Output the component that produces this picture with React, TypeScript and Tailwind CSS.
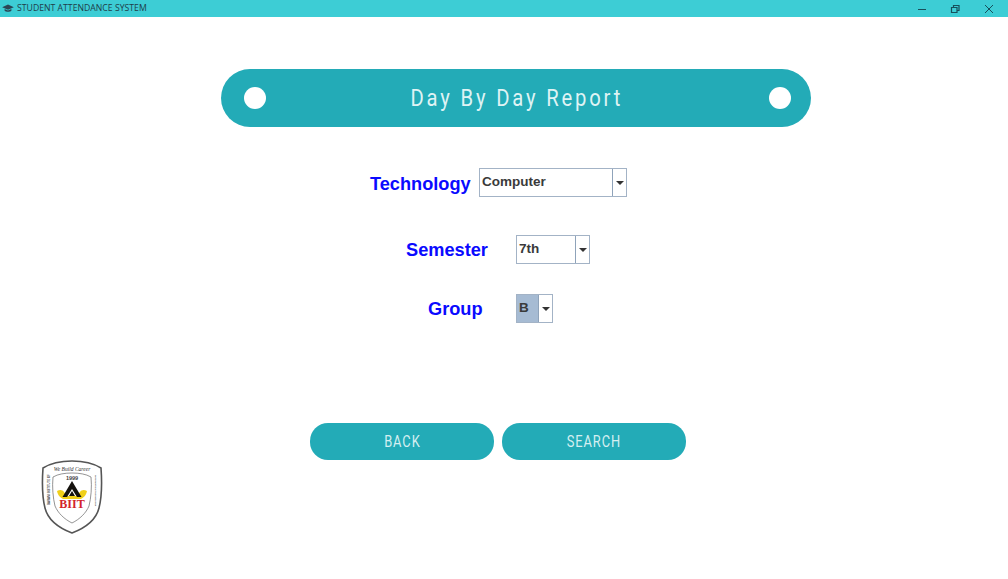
// Day By Day Report screen of the attendance desktop app.
const din = "font-['Roboto',sans-serif]";
const arial = "font-['Liberation_Sans',Arial,sans-serif]";

function TitleBar() {
  return (
    <div className="flex h-[17px] items-center bg-[#3dcdd5] pl-[2px] text-[#1f3d4a]">
      <svg width="12" height="9" viewBox="0 0 12 9" className="mr-[3px]">
        <path d="M6 0.5 11.8 3.2 6 5.8 0.2 3.2Z" fill="#2b4656" />
        <path d="M2.6 5v1.8C4 8.2 8 8.2 9.4 6.8V5L6 6.6Z" fill="#2b4656" />
      </svg>
      <span className="text-[8.7px] leading-none font-['Open_Sans',sans-serif]">STUDENT ATTENDANCE SYSTEM</span>
      <div className="ml-auto flex items-center">
        <svg width="10" height="10" viewBox="0 0 10 10" className="mr-[23px]">
          <path d="M1 5.5h8" stroke="#17505c" strokeWidth="1" />
        </svg>
        <svg width="10" height="10" viewBox="0 0 10 10" className="mr-[24px]">
          <path d="M1.5 3.5h5.5v5H1.5zM3.5 3.5V1.5H9v5H7" fill="none" stroke="#17505c" strokeWidth="1.2" />
        </svg>
        <svg width="10" height="10" viewBox="0 0 10 10" className="mr-[14px]">
          <path d="M1 1l8 8M9 1 1 9" stroke="#17505c" strokeWidth="1" />
        </svg>
      </div>
    </div>
  );
}

function Combo({ value, fieldClass, selected }: { value: string; fieldClass: string; selected?: boolean }) {
  return (
    <div className="flex h-[29px] border border-[#a3b3c6] bg-white">
      <div
        className={`${fieldClass} ${arial} border-r border-[#8fa3ba] pl-[2px] pt-[4px] text-[13.5px] leading-[17px] font-bold text-[#3a3a3a] ${
          selected ? "bg-[#a6bbd3]" : ""
        }`}
      >
        {value}
      </div>
      <div className="flex w-[13px] items-center justify-center">
        <div className="h-0 w-0 border-x-[4px] border-t-[4px] border-x-transparent border-t-[#333333]" />
      </div>
    </div>
  );
}

function Logo() {
  return (
    <svg width="62" height="74" viewBox="0 0 62 74">
      <path d="M31 1C20 1 10 3 2 8c-1 14-1 28 2 40 3 12 14 20 27 25 13-5 24-13 27-25 3-12 3-26 2-40C52 3 42 1 31 1Z" fill="#fff" stroke="#555555" strokeWidth="1.6" />
      <path d="M31 13c-7 0-14 1-19 4-1 10 0 21 2 29 3 7 9 13 17 17 8-4 14-10 17-17 2-8 3-19 2-29-5-3-12-4-19-4Z" fill="#fff" stroke="#666666" strokeWidth="0.7" />
      <text x="31" y="10.5" textAnchor="middle" fontSize="5.5" fontStyle="italic" fontFamily="'Liberation Serif',serif" fill="#333">We Build Career</text>
      <text x="8.5" y="45" transform="rotate(-90 8.5 45)" fontSize="2.8" fontWeight="700" fontFamily="'Liberation Sans',sans-serif" fill="#444">BARANI INSTITUTE OF</text>
      <text x="53.5" y="15" transform="rotate(90 53.5 15)" fontSize="2.2" fontWeight="700" fontFamily="'Liberation Sans',sans-serif" fill="#444">INFORMATION TECHNOLOGY</text>
      <text x="31" y="19.5" textAnchor="middle" fontSize="5.5" fontWeight="700" fontFamily="'Liberation Sans',sans-serif" fill="#444">1999</text>
      <path d="M16 31c5-3 8 1 9 5h12c1-4 4-8 9-5-1 5-4 7-6 8H22c-2-1-5-3-6-8Z" fill="#f0d01a" />
      <path d="M31 21 40.5 37H36L31 29l-5 8h-4.500Z" fill="#14120e" />
      <path d="M31 31 34 36H28Z" fill="#14120e" />
      <text x="31" y="48" textAnchor="middle" fontSize="12" fontWeight="700" fontFamily="'Liberation Serif',serif" fill="#d3232a">BIIT</text>
    </svg>
  );
}

export default function App() {
  return (
    <div className="flex h-[579px] w-[1008px] flex-col overflow-hidden bg-white">
      <TitleBar />

      <div className="ml-[221px] mt-[52px] flex h-[58px] w-[590px] items-center justify-between rounded-[29px] bg-[#23abb7] pl-[23px] pr-[20px]">
        <div className="h-[22px] w-[22px] rounded-full bg-white" />
        <span className={`${din} -ml-[2px] inline-block scale-x-[0.88] pt-[2px] text-[23px] tracking-[3.2px] text-[#dff3f4]`}>Day By Day Report</span>
        <div className="h-[22px] w-[22px] rounded-full bg-white" />
      </div>

      <div className={`${arial} text-[18.2px] leading-[24px] font-bold text-[#0a0aff]`}>
        <div className="mt-[41px] flex items-center">
          <span className="ml-[370px] w-[109px] pt-[2px]">Technology</span>
          <Combo value="Computer" fieldClass="w-[133px]" />
        </div>
        <div className="mt-[38px] flex items-center">
          <span className="ml-[406px] w-[110px] pt-[1px]">Semester</span>
          <Combo value="7th" fieldClass="w-[59px]" />
        </div>
        <div className="mt-[30px] flex items-center">
          <span className="ml-[428px] w-[88px] pt-[1px]">Group</span>
          <Combo value="B" fieldClass="w-[22px]" selected />
        </div>
      </div>

      <div className="ml-[310px] mt-[100px] flex gap-[8px]">
        <div className="flex h-[37px] w-[184px] items-center justify-center rounded-[18px] bg-[#23abb7]">
          <span className={`${din} inline-block scale-x-[0.78] pt-[1px] text-[16.5px] tracking-[1.2px] text-[#d5eff1]`}>BACK</span>
        </div>
        <div className="flex h-[37px] w-[184px] items-center justify-center rounded-[18px] bg-[#23abb7]">
          <span className={`${din} inline-block scale-x-[0.78] pt-[1px] text-[16.5px] tracking-[1.2px] text-[#d5eff1]`}>SEARCH</span>
        </div>
      </div>

      <div className="ml-[41px]">
        <Logo />
      </div>
    </div>
  );
}
